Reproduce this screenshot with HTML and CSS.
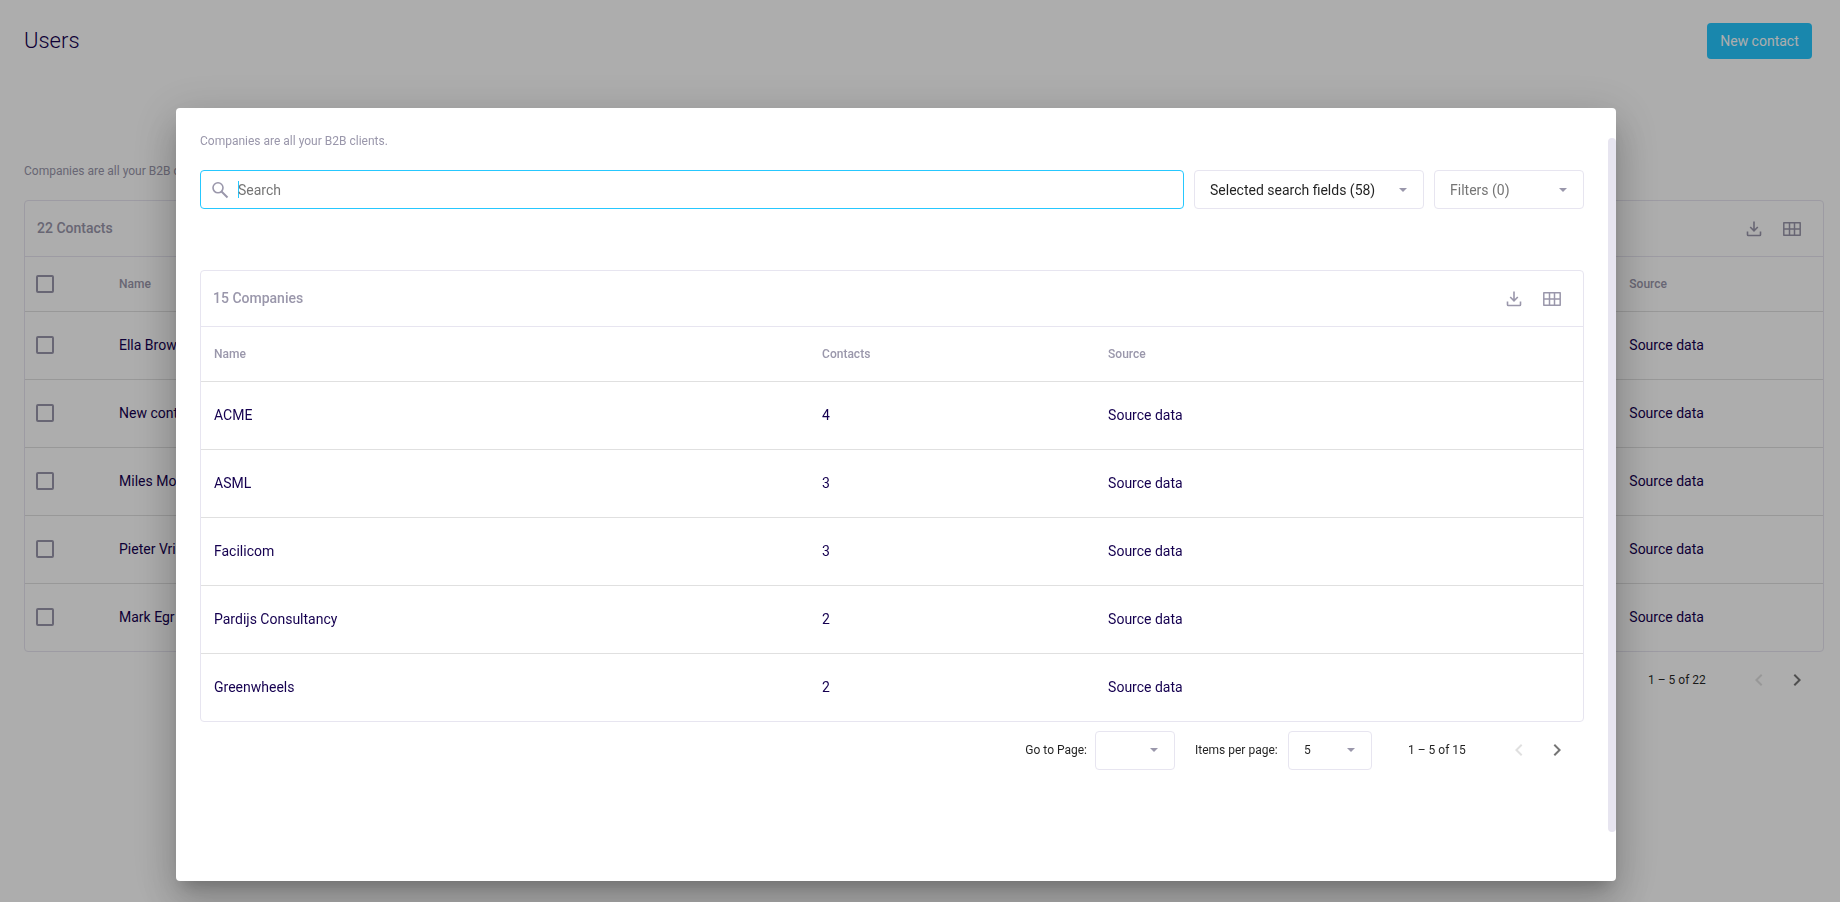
FILE: index.html
```html
<!DOCTYPE html>
<html lang="en">
<head>
<meta charset="utf-8">
<title>Users</title>
<link rel="stylesheet" href="styles.css">
</head>
<body>
<svg class="sprite" aria-hidden="true">
  <symbol id="download" viewBox="0 0 18 18"><path d="M9 1.500v9M5.200 7 9 10.800 12.800 7M2.500 11.500v3.200q0 .8.8.8h11.400q.8 0 .8-.8v-3.200" fill="none" stroke="currentColor" stroke-width="1.600"/></symbol>
  <symbol id="grid" viewBox="0 0 18 18"><path d="M.8 2.800h16.400v12.400H.8zM1 9h16M6.500 2.500v13M11.500 2.500v13" fill="none" stroke="currentColor" stroke-width="1.500" stroke-linejoin="round"/></symbol>
  <symbol id="search" viewBox="0 0 18 18"><circle cx="7" cy="6.800" r="5" fill="none" stroke="currentColor" stroke-width="1.600"/><path d="M10.500 10.500l6 6" fill="none" stroke="currentColor" stroke-width="2"/></symbol>
  <symbol id="prev" viewBox="0 0 24 24"><path d="M15.410 7.410 14 6l-6 6 6 6 1.410-1.410L10.830 12z" fill="currentColor"/></symbol>
  <symbol id="next" viewBox="0 0 24 24"><path d="M10 6 8.590 7.410 13.170 12l-4.580 4.590L10 18l6-6z" fill="currentColor"/></symbol>
  <symbol id="caret" viewBox="0 0 8 4"><path d="M0 0h8L4 4z" fill="currentColor"/></symbol>
</svg>

<main class="page">
  <header class="page-head">
    <h1 class="title">Users</h1>
    <button class="primary" type="button">New contact</button>
  </header>
  <p class="hint">Companies are all your B2B clients.</p>
  <section class="card">
    <div class="card-head">
      <h2 class="card-title">22 Contacts</h2>
      <div class="tools">
        <button class="tool" type="button" aria-label="Download"><svg><use href="#download"/></svg></button>
        <button class="tool" type="button" aria-label="Columns"><svg><use href="#grid"/></svg></button>
      </div>
    </div>
    <table class="table contacts">
      <thead>
        <tr><th class="col-check"><input class="check" type="checkbox" aria-label="Select all"></th><th class="col-person">Name</th><th>Source</th></tr>
      </thead>
      <tbody>
        <tr><td><input class="check" type="checkbox" aria-label="Select Ella Brown"></td><td>Ella Brown</td><td>Source data</td></tr>
        <tr><td><input class="check" type="checkbox" aria-label="Select New contact"></td><td>New contact</td><td>Source data</td></tr>
        <tr><td><input class="check" type="checkbox" aria-label="Select Miles Mo"></td><td>Miles Mo</td><td>Source data</td></tr>
        <tr><td><input class="check" type="checkbox" aria-label="Select Pieter Vries"></td><td>Pieter Vries</td><td>Source data</td></tr>
        <tr><td><input class="check" type="checkbox" aria-label="Select Mark Egr"></td><td>Mark Egr</td><td>Source data</td></tr>
      </tbody>
    </table>
  </section>
  <nav class="pager" aria-label="Contacts pages">
    <span class="range">1 – 5 of 22</span>
    <button class="step" type="button" aria-label="Previous page" disabled><svg><use href="#prev"/></svg></button>
    <button class="step" type="button" aria-label="Next page"><svg><use href="#next"/></svg></button>
  </nav>
</main>

<div class="backdrop">
  <div class="dialog" role="dialog" aria-modal="true" aria-label="Companies">
    <div class="dialog-body">
      <p class="hint">Companies are all your B2B clients.</p>
      <div class="filters">
        <label class="search">
          <svg class="search-icon"><use href="#search"/></svg>
          <span class="cursor"></span>
          <input class="search-input" type="text" placeholder="Search" aria-label="Search" autofocus>
        </label>
        <div class="select fields">
          <select aria-label="Search fields"><option>Selected search fields (58)</option></select>
          <svg class="caret"><use href="#caret"/></svg>
        </div>
        <div class="select filter">
          <select aria-label="Filters"><option>Filters (0)</option></select>
          <svg class="caret"><use href="#caret"/></svg>
        </div>
      </div>
      <section class="card">
        <div class="card-head">
          <h2 class="card-title">15 Companies</h2>
          <div class="tools">
            <button class="tool" type="button" aria-label="Download"><svg><use href="#download"/></svg></button>
            <button class="tool" type="button" aria-label="Columns"><svg><use href="#grid"/></svg></button>
          </div>
        </div>
        <table class="table companies">
          <thead>
            <tr><th class="col-name">Name</th><th class="col-count">Contacts</th><th>Source</th></tr>
          </thead>
          <tbody>
            <tr><td>ACME</td><td>4</td><td>Source data</td></tr>
            <tr><td>ASML</td><td>3</td><td>Source data</td></tr>
            <tr><td>Facilicom</td><td>3</td><td>Source data</td></tr>
            <tr><td>Pardijs Consultancy</td><td>2</td><td>Source data</td></tr>
            <tr><td>Greenwheels</td><td>2</td><td>Source data</td></tr>
          </tbody>
        </table>
      </section>
      <nav class="pager" aria-label="Companies pages">
        <label class="pager-label" for="goto">Go to Page:</label>
        <div class="select goto">
          <select id="goto"><option></option></select>
          <svg class="caret"><use href="#caret"/></svg>
        </div>
        <label class="pager-label per-page" for="size">Items per page:</label>
        <div class="select size">
          <select id="size"><option>5</option></select>
          <svg class="caret"><use href="#caret"/></svg>
        </div>
        <span class="range">1 – 5 of 15</span>
        <button class="step" type="button" aria-label="Previous page" disabled><svg><use href="#prev"/></svg></button>
        <button class="step" type="button" aria-label="Next page"><svg><use href="#next"/></svg></button>
      </nav>
    </div>
    <div class="scroll-thumb"></div>
  </div>
</div>
</body>
</html>
```
FILE: styles.css
```css
:root {
  --ink: #150050;
  --muted: #9a97ab;
  --line: #e7e5f0;
  --rule: #e0e0e0;
  --accent: #26c8ff;
}

* { box-sizing: border-box; }

body {
  margin: 0;
  background: #fff;
  color: var(--ink);
  font: 14px/20px Roboto, sans-serif;
}

h1, h2, p { margin: 0; }

button, input, select { font: inherit; }

.sprite { display: none; }

.page { padding: 20px 16px 0 24px; }

.page-head {
  display: flex;
  align-items: center;
  justify-content: space-between;
  height: 42px;
  padding-right: 12px;
}

.title { font-size: 22px; line-height: 32px; font-weight: 300; }

.primary {
  min-width: 105px;
  height: 36px;
  padding: 0 12px;
  border: 0;
  border-radius: 4px;
  background: var(--accent);
  color: #fff;
}

.hint { font-size: 12px; line-height: 16px; color: var(--muted); }

.page > .hint { margin: 101px 0 21px; }

.card {
  border: 1px solid var(--line);
  border-radius: 4px;
}

.card-head {
  display: flex;
  align-items: center;
  justify-content: space-between;
  height: 56px;
  padding: 0 12px;
  border-bottom: 1px solid var(--line);
}

.card-title {
  padding-bottom: 2px;
  font-size: 14px;
  line-height: 20px;
  font-weight: 500;
  color: var(--muted);
}

.tools { display: flex; }

.tool {
  display: flex;
  align-items: center;
  justify-content: center;
  width: 38px;
  height: 38px;
  padding: 0;
  border: 0;
  background: none;
  color: var(--muted);
}

.tool svg { width: 18px; height: 18px; }

.table {
  width: 100%;
  table-layout: fixed;
  border-collapse: separate;
  border-spacing: 0;
}

.table th, .table td {
  padding: 0 0 0 13px;
  border-bottom: 1px solid var(--rule);
  text-align: left;
  vertical-align: middle;
}

.table th { height: 55px; font-size: 12px; font-weight: 500; color: var(--muted); }

.table td { height: 68px; padding-bottom: 2px; }

.table tbody tr:last-child td { height: 67px; border-bottom: 0; }

.col-name { width: 44%; }
.col-count { width: 286px; }
.col-check { width: 81px; }
.col-person { width: 84%; }

.table .check {
  display: block;
  appearance: none;
  width: 18px;
  height: 18px;
  margin: 0 0 0 -2px;
  border: 2px solid var(--muted);
  border-radius: 2px;
}

.pager {
  display: flex;
  align-items: center;
  justify-content: flex-end;
  height: 56px;
  padding-right: 8px;
  font-size: 12px;
  color: rgba(0, 0, 0, 0.87);
}

.range { min-width: 60px; margin: 0 32px 0 36px; }

.step {
  display: flex;
  align-items: center;
  justify-content: center;
  width: 38px;
  height: 38px;
  padding: 0;
  border: 0;
  background: none;
  color: #757575;
}

.step:disabled { color: #e0e0e0; }
.step svg { width: 24px; height: 24px; }

.backdrop {
  position: fixed;
  inset: 0;
  display: flex;
  align-items: flex-start;
  justify-content: center;
  padding: 108px 72px 0 24px;
  background: rgba(0, 0, 0, 0.32);
}

.dialog {
  display: flex;
  width: 100%;
  max-width: 1440px;
  border-radius: 4px;
  background: #fff;
  box-shadow: 0 11px 15px -7px rgba(0, 0, 0, 0.2), 0 24px 38px 3px rgba(0, 0, 0, 0.14), 0 9px 46px 8px rgba(0, 0, 0, 0.12);
}

.dialog-body { flex: 1; padding: 25px 24px 103px; }

/* The thumb lies over the body's right padding, as an overlay scrollbar. */
.scroll-thumb {
  width: 8px;
  margin: 30px 0 49px -8px;
  border-radius: 4px;
  background: var(--line);
}

.dialog-body { padding-right: 32px; }

.filters { display: flex; gap: 10px; margin: 21px 0 61px; }

.search {
  display: flex;
  flex: 1;
  align-items: center;
  height: 39px;
  padding-left: 10px;
  border: 1px solid var(--accent);
  border-radius: 4px;
  color: var(--muted);
}

.search-icon { width: 18px; height: 18px; margin-right: 9px; }

.cursor { width: 1px; height: 17px; margin-right: -1px; background: var(--accent); }

.search-input {
  flex: 1;
  padding: 0;
  border: 0;
  outline: 0;
  background: none;
  color: rgba(0, 0, 0, 0.87);
  caret-color: var(--accent);
}

.search-input::placeholder { color: #757575; }

.select { position: relative; height: 39px; }

.select select {
  appearance: none;
  width: 100%;
  height: 100%;
  padding: 0 30px 0 15px;
  border: 1px solid var(--line);
  border-radius: 4px;
  background: #fff;
  color: rgba(0, 0, 0, 0.87);
}

.caret {
  position: absolute;
  top: 50%;
  right: 17px;
  width: 8px;
  height: 4px;
  margin-top: -2px;
  color: var(--muted);
  pointer-events: none;
}

.fields { width: 230px; }
.filter { width: 150px; }
.filter select { color: #757575; }
.pager-label { margin-right: 8px; }
.per-page { min-width: 85px; }
.goto { width: 80px; margin-right: 20px; }
.size { width: 84px; }
```
